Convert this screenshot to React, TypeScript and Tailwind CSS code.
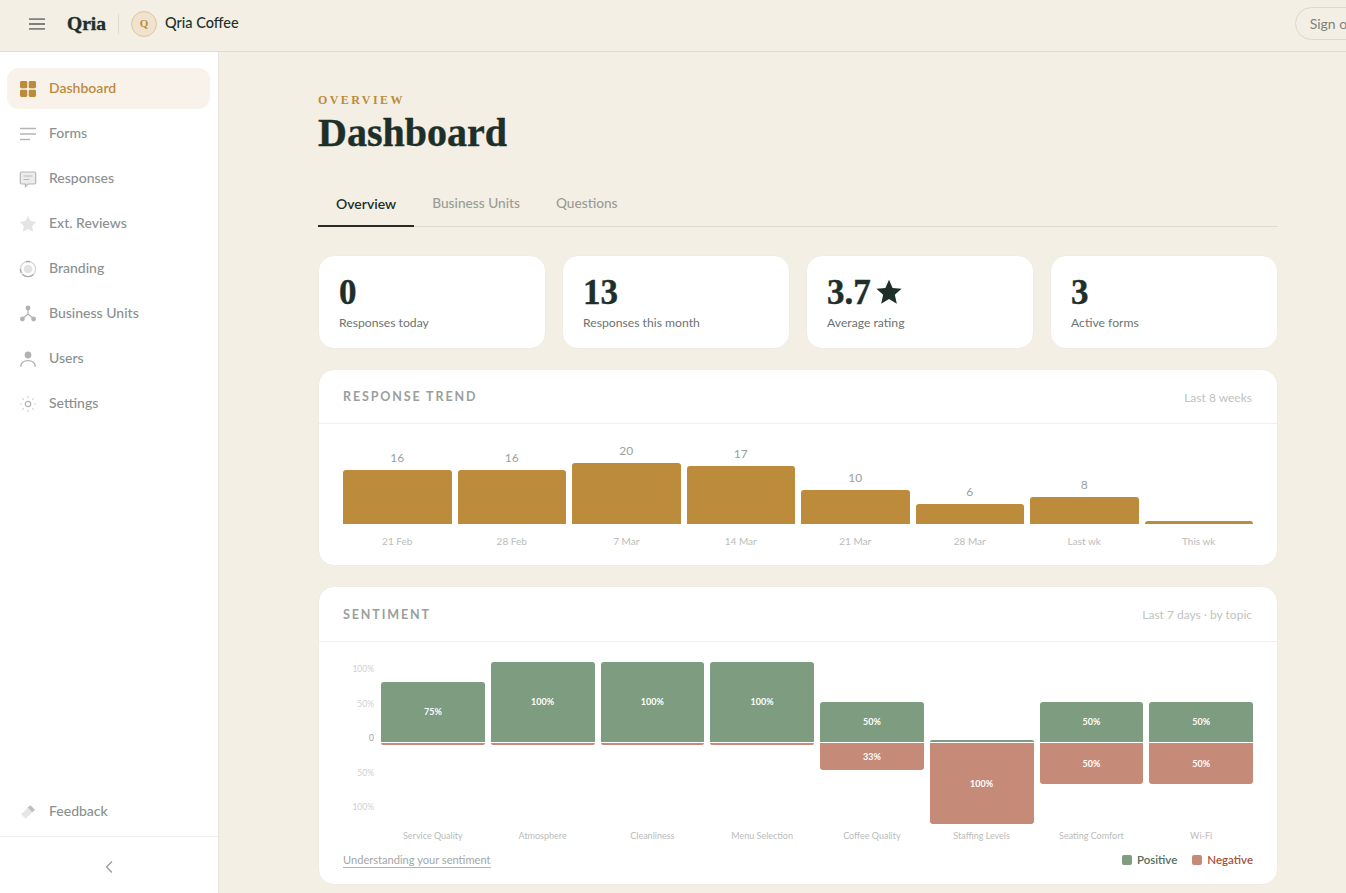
import type { ReactNode } from "react";

const sans = "font-['Lato','Noto_Sans',sans-serif]";
const serif = "font-['Liberation_Serif',serif]";
const heavy = "[-webkit-text-stroke:0.4px_#1e2f2a]";

const trend = [
  { label: "21 Feb", value: "16", height: 54 },
  { label: "28 Feb", value: "16", height: 54 },
  { label: "7 Mar", value: "20", height: 61 },
  { label: "14 Mar", value: "17", height: 58 },
  { label: "21 Mar", value: "10", height: 34 },
  { label: "28 Mar", value: "6", height: 20 },
  { label: "Last wk", value: "8", height: 27 },
  { label: "This wk", value: "", height: 3 },
];

const sentiment = [
  { topic: "Service Quality", pos: 75, neg: 0 },
  { topic: "Atmosphere", pos: 100, neg: 0 },
  { topic: "Cleanliness", pos: 100, neg: 0 },
  { topic: "Menu Selection", pos: 100, neg: 0 },
  { topic: "Coffee Quality", pos: 50, neg: 33 },
  { topic: "Staffing Levels", pos: 0, neg: 100 },
  { topic: "Seating Comfort", pos: 50, neg: 50 },
  { topic: "Wi-Fi", pos: 50, neg: 50 },
];

function Icon({ children }: { children: ReactNode }) {
  return (
    <svg width="18" height="18" viewBox="0 0 18 18" className="shrink-0">
      {children}
    </svg>
  );
}

const nav: { label: string; icon: ReactNode; active?: boolean }[] = [
  {
    label: "Dashboard",
    active: true,
    icon: (
      <Icon>
        <g fill="#bc8b3c">
          <rect x="1" y="1" width="7.3" height="7.3" rx="1.4" />
          <rect x="9.7" y="1" width="7.3" height="7.3" rx="1.4" />
          <rect x="1" y="9.7" width="7.3" height="7.3" rx="1.4" />
          <rect x="9.7" y="9.7" width="7.3" height="7.3" rx="1.4" />
        </g>
      </Icon>
    ),
  },
  {
    label: "Forms",
    icon: (
      <Icon>
        <g stroke="#b4b7b4" strokeWidth="1.5">
          <path d="M1 3.5h16" />
          <path d="M1 9h16" />
          <path d="M1 14.5h10" />
        </g>
      </Icon>
    ),
  },
  {
    label: "Responses",
    icon: (
      <Icon>
        <path d="M2.5 2h13a1.2 1.2 0 0 1 1.2 1.2v9.6a1.2 1.2 0 0 1-1.2 1.2H9l-2.6 2.6V14H2.5a1.2 1.2 0 0 1-1.2-1.2V3.2A1.2 1.2 0 0 1 2.5 2z" fill="#ececec" stroke="#b4b7b4" strokeWidth="1.2" />
        <path d="M4.5 6h9M4.5 9.5h6" stroke="#b4b7b4" strokeWidth="1.2" />
      </Icon>
    ),
  },
  {
    label: "Ext. Reviews",
    icon: (
      <Icon>
        <path d="M9 .8l2.5 5.3 5.7.8-4.1 4 1 5.8L9 14.1l-5.1 2.6 1-5.8-4.1-4 5.7-.8z" fill="#e4e4e4" />
      </Icon>
    ),
  },
  {
    label: "Branding",
    icon: (
      <Icon>
        <circle cx="9" cy="9" r="7.6" fill="none" stroke="#d6d7d6" strokeWidth="1.4" />
        <path d="M3.6 14.400A7.600 7.600 0 0 0 14.400 14.400M7 1.700A7.600 7.600 0 0 1 11 1.700M1.400 9A7.600 7.600 0 0 0 2.400 12.800" fill="none" stroke="#a8aba8" strokeWidth="1.4" />
        <circle cx="9" cy="9" r="4.300" fill="#e2e2e2" />
      </Icon>
    ),
  },
  {
    label: "Business Units",
    icon: (
      <Icon>
        <path d="M9 4v5M9 9l-5.5 4.5M9 9l5.500 4.500" stroke="#b0b3b0" strokeWidth="1.2" fill="none" />
        <circle cx="9" cy="3" r="2.400" fill="#b0b3b0" />
        <circle cx="3.400" cy="14" r="2.400" fill="#b0b3b0" />
        <circle cx="14.600" cy="14" r="2.400" fill="#b0b3b0" />
      </Icon>
    ),
  },
  {
    label: "Users",
    icon: (
      <Icon>
        <circle cx="9" cy="5" r="3.400" fill="#b0b3b0" />
        <path d="M1.600 16.600c.5-4 3.600-6 7.400-6s6.900 2 7.400 6" fill="none" stroke="#b0b3b0" strokeWidth="1.400" />
      </Icon>
    ),
  },
  {
    label: "Settings",
    icon: (
      <Icon>
        <circle cx="9" cy="9" r="2.700" fill="none" stroke="#b0b3b0" strokeWidth="1.200" />
        <path d="M9 .8v2.400M9 14.800v2.400M.8 9h2.400M14.800 9h2.400M3.200 3.200l1.700 1.700M13.100 13.100l1.700 1.700M3.200 14.800l1.700-1.700M13.100 4.900l1.700-1.700" stroke="#d4d5d4" strokeWidth="1.200" />
      </Icon>
    ),
  },
];

function NavItem({ label, icon, active }: { label: string; icon: ReactNode; active?: boolean }) {
  return (
    <div
      className={`flex h-[41px] items-center gap-[12px] rounded-[12px] px-[12px] text-[14px] ${
        active ? "bg-[#f8f2ea] font-semibold text-[#bc8b3c]" : "font-medium text-[#8b918e]"
      }`}
    >
      {icon}
      <span className="mb-[2px]">{label}</span>
    </div>
  );
}

function StatCard({ value, label, star }: { value: string; label: string; star?: boolean }) {
  return (
    <div className="h-[94px] rounded-[16px] border border-[#f0ece2] bg-white px-[20px] pt-[18px]">
      <div className={`${serif} ${heavy} flex h-[36px] items-center gap-[4px] text-[35px] leading-none font-bold text-[#1e2f2a]`}>
        {value}
        {star && (
          <svg width="28" height="28" viewBox="0 0 24 24">
            <path d="M12 1.500l3.100 7.100 7.700.7-5.800 5.100 1.700 7.600L12 18l-6.700 4 1.700-7.600-5.800-5.100 7.700-.7z" fill="#1e2f2a" />
          </svg>
        )}
      </div>
      <div className="mt-[5px] text-[12.200px] leading-[16px] text-[#6d7370]">{label}</div>
    </div>
  );
}

function Panel({ title, note, head, children }: { title: string; note: string; head: string; children: ReactNode }) {
  return (
    <section className="mb-[20px] rounded-[16px] border border-[#f0ece2] bg-white">
      <div className={`flex items-center justify-between border-b border-[#eef0ee] pt-[2px] pr-[25px] pl-[24px] ${head}`}>
        <h2 className="text-[12.500px] font-bold tracking-[0.15em] text-[#9a9f9c] uppercase">{title}</h2>
        <span className="text-[12px] text-[#c0c3c0]">{note}</span>
      </div>
      {children}
    </section>
  );
}

function TrendChart() {
  return (
    <div className="px-[24px] pt-[20px] pb-[17px]">
      <div className="flex h-[80px] items-end gap-[6px]">
        {trend.map((b) => (
          <div key={b.label} className="flex flex-1 flex-col items-center justify-end">
            {b.value && <span className="mb-[4px] text-[12px] leading-[16px] text-[#9a9f9c]">{b.value}</span>}
            <div className="w-full rounded-t-[3px] bg-[#bc8b3c]" style={{ height: b.height }} />
          </div>
        ))}
      </div>
      <div className="mt-[10px] flex gap-[6px]">
        {trend.map((b) => (
          <span key={b.label} className="flex-1 text-center text-[10px] leading-[14px] text-[#b9bcb9]">
            {b.label}
          </span>
        ))}
      </div>
    </div>
  );
}

function SentimentChart() {
  return (
    <div className="px-[24px] pt-[20px]">
      <div className="flex gap-[7px]">
        <div className="flex h-[162px] w-[31px] flex-col justify-between pb-[10px] text-right text-[8.500px] leading-[14px] text-[#cfd1cf]">
          <span>100%</span>
          <span>50%</span>
          <span className="text-[#9a9f9c]">0</span>
          <span>50%</span>
          <span>100%</span>
        </div>
        <div className="flex flex-1 gap-[6px]">
          {sentiment.map((s) => (
            <div key={s.topic} className="flex-1">
              <div className="flex h-[80px] items-end">
                <div
                  className="flex w-full items-center justify-center rounded-t-[3px] bg-[#7d9c80] text-[9px] font-bold text-white"
                  style={{ height: s.pos ? (s.pos / 100) * 80 : 2 }}
                >
                  {s.pos > 0 && `${s.pos}%`}
                </div>
              </div>
              <div
                className="mt-[1px] flex w-full items-center justify-center rounded-b-[3px] bg-[#c68a79] text-[9px] font-bold text-white"
                style={{ height: s.neg ? (s.neg / 100) * 81 : 2 }}
              >
                {s.neg > 0 && `${s.neg}%`}
              </div>
            </div>
          ))}
        </div>
      </div>
      <div className="mt-[5px] ml-[38px] flex gap-[6px]">
        {sentiment.map((s) => (
          <span key={s.topic} className="flex-1 text-center text-[9px] leading-[14px] text-[#b9bcb9]">
            {s.topic}
          </span>
        ))}
      </div>
      <div className="mt-[9px] flex h-[16px] items-center justify-between">
        <a className="border-b border-[#b0b3b0] text-[11.100px] leading-[14px] text-[#a3a7a4]">Understanding your sentiment</a>
        <div className="flex items-center gap-[15px] text-[11.500px] font-semibold">
          <span className="flex items-center gap-[5px] text-[#52705a]">
            <i className="h-[10px] w-[10px] rounded-[2px] bg-[#7d9c80]" />
            Positive
          </span>
          <span className="flex items-center gap-[5px] text-[#a3533f]">
            <i className="h-[10px] w-[10px] rounded-[2px] bg-[#c68a79]" />
            Negative
          </span>
        </div>
      </div>
      <div className="h-[16px]" />
    </div>
  );
}

export default function App() {
  return (
    <div className={`${sans} flex h-screen w-screen flex-col overflow-hidden bg-[#f3efe4]`}>
      <header className="flex h-[52px] w-[1400px] shrink-0 items-center justify-between border-b border-[#e2ddd2] pr-[25px] pb-[4px] pl-[29px]">
        <div className="flex items-center">
          <svg width="16" height="12" viewBox="0 0 16 12">
            <path d="M0 1.200h16M0 6h16M0 10.800h16" stroke="#7f827c" strokeWidth="1.800" />
          </svg>
          <span className={`${serif} ${heavy} ml-[22px] text-[19.500px] font-bold text-[#1e2f2a]`}>Qria</span>
          <span className="mx-[12px] h-[20px] w-px bg-[#e0dbcf]" />
          <span className={`${serif} flex h-[26px] w-[26px] items-center justify-center rounded-full border border-[#dcc5a2] bg-[#f0e3ce] text-[11px] font-bold text-[#bc8b3c]`}>
            Q
          </span>
          <span className="mb-[2px] ml-[8px] text-[14.500px] font-medium text-[#1e2f2a]">Qria Coffee</span>
        </div>
        <button className="h-[33px] rounded-full border border-[#dcd8cd] px-[14px] text-[14px] text-[#7f827c]">Sign out</button>
      </header>
      <div className="flex min-h-0 flex-1">
        <aside className="flex w-[219px] shrink-0 flex-col border-r border-[#e8e4da] bg-white">
          <nav className="flex flex-1 flex-col gap-[4px] pt-[16px] pr-[8px] pl-[7px]">
            {nav.map((item) => (
              <NavItem key={item.label} {...item} />
            ))}
          </nav>
          <div className="pr-[8px] pb-[4px] pl-[7px]">
            <NavItem
              label="Feedback"
              icon={
                <Icon>
                  <g transform="rotate(45 9 9)">
                    <rect x="5.800" y="2.500" width="6.400" height="13" fill="#e6e6e6" />
                    <rect x="5.800" y="2.500" width="6.400" height="3.500" fill="#bcbebc" />
                  </g>
                </Icon>
              }
            />
          </div>
          <div className="flex h-[57px] items-center justify-center border-t border-[#eef0ee] pt-[4px]">
            <svg width="10" height="14" viewBox="0 0 10 14">
              <path d="M8 1.500L2.500 7 8 12.500" fill="none" stroke="#9a9f9c" strokeWidth="1.400" />
            </svg>
          </div>
        </aside>
        <main className="min-w-0 flex-1 overflow-hidden pt-[41px] pr-[68px] pl-[99px]">
          <div className={`${serif} text-[12px] leading-[14px] font-bold tracking-[0.2em] text-[#bc8b3c] uppercase`}>Overview</div>
          <h1 className={`${serif} ${heavy} mt-[4px] text-[40px] leading-[44px] font-bold text-[#1e2f2a]`}>Dashboard</h1>
          <div className="mt-[28px] flex border-b border-[#dfdbd0] text-[14px] font-medium">
            <div className="-mb-px border-b-2 border-[#2c2a25] px-[18px] pt-[10px] pb-[11px] font-semibold text-[#1e2f2a]">Overview</div>
            <div className="px-[18px] pt-[10px] pb-[11px] text-[13.700px] text-[#9a9c94]">Business Units</div>
            <div className="px-[18px] pt-[10px] pb-[11px] text-[13.700px] text-[#9a9c94]">Questions</div>
          </div>
          <div className="mt-[28px] mb-[20px] grid grid-cols-4 gap-[16px]">
            <StatCard value="0" label="Responses today" />
            <StatCard value="13" label="Responses this month" />
            <StatCard value="3.7" label="Average rating" star />
            <StatCard value="3" label="Active forms" />
          </div>
          <Panel title="Response trend" note="Last 8 weeks" head="h-[54px]">
            <TrendChart />
          </Panel>
          <Panel title="Sentiment" note="Last 7 days · by topic" head="h-[55px]">
            <SentimentChart />
          </Panel>
        </main>
      </div>
    </div>
  );
}
